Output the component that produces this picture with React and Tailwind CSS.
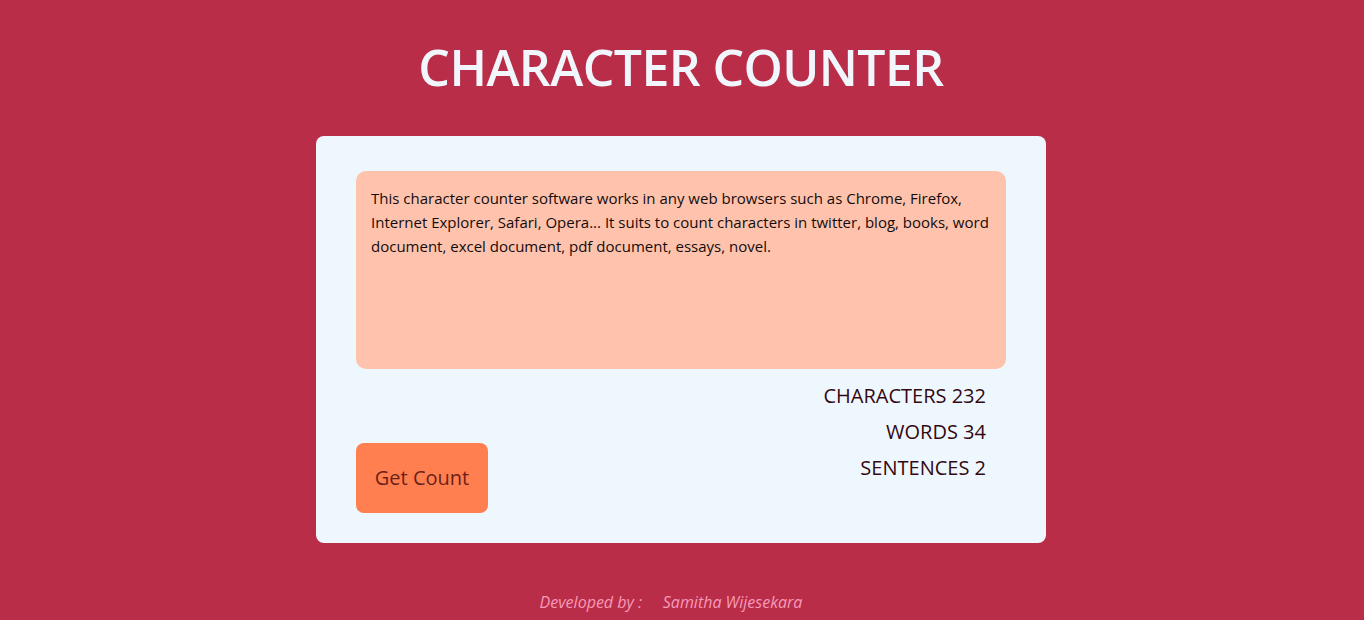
import React from "react";

export default function App() {
  const text =
    "This character counter software works in any web browsers such as Chrome, Firefox, Internet Explorer, Safari, Opera... It suits to count characters in twitter, blog, books, word document, excel document, pdf document, essays, novel.";
  return (
    <div
      className="min-h-[620px] w-full bg-[#b92d48] flex flex-col items-center pr-[2px]"
      style={{ fontFamily: '"Open Sans", "Noto Sans", sans-serif' }}
    >
      <h1 className="mt-[35px] text-[50px] leading-[64px] font-semibold text-[#f0f6fc] tracking-[-0.6px]">
        CHARACTER COUNTER
      </h1>
      <div className="mt-[37px] w-[730px] h-[407px] bg-[#eff7fe] rounded-[8px] pt-[35px] px-[40px] flex flex-col">
        <textarea
          defaultValue={text}
          className="w-[650px] h-[198px] bg-[#ffc3ad] rounded-[10px] px-[15px] py-[15px] text-[15px] leading-[24px] text-[#140c0c] resize-none outline-none border-0"
          style={{ fontFamily: '"Open Sans", "Noto Sans", sans-serif' }}
        />
        <div className="flex items-start justify-between">
          <button className="mt-[74px] w-[132px] h-[70px] bg-[#ff7f50] rounded-[8px] text-[20px] text-[#6b1f17] font-medium">
            Get Count
          </button>
          <div className="flex flex-col items-end mr-[20px] mt-[9px] text-[20px] leading-[36px] font-medium text-[#330810]">
            <span>CHARACTERS 232</span>
            <span>WORDS 34</span>
            <span>SENTENCES 2</span>
          </div>
        </div>
      </div>
      <div className="mt-[47px] pr-[20px] text-[16px] italic text-[#f79ab8]">
        Developed by :&nbsp;&nbsp;&nbsp;&nbsp; Samitha Wijesekara
      </div>
    </div>
  );
}
